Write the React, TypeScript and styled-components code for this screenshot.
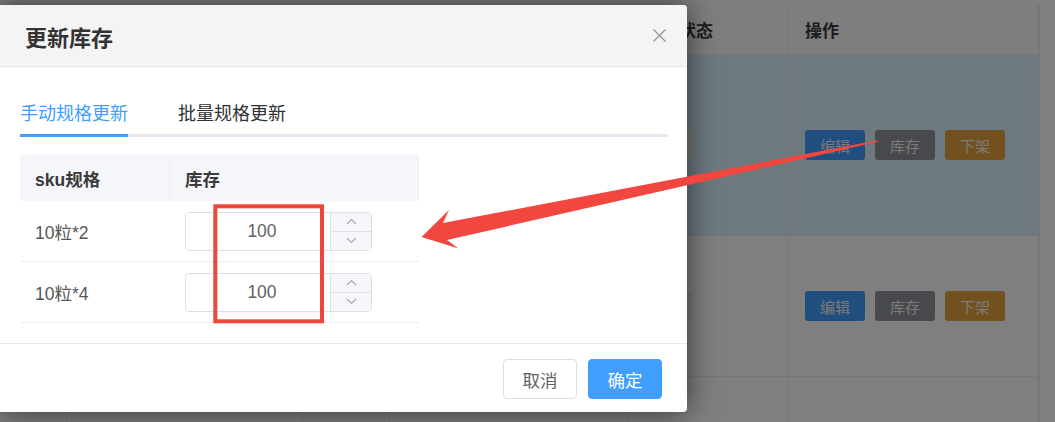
import React from "react";
import styled, { createGlobalStyle } from "styled-components";

const GlobalStyle = createGlobalStyle`
  html, body { margin: 0; padding: 0; }
  body {
    font-family: "Liberation Sans", "Noto Sans CJK SC", sans-serif;
    background: #808080;
    overflow: hidden;
  }
  * { box-sizing: border-box; }
`;

const Stage = styled.div`
  position: relative;
  width: 1055px;
  height: 422px;
  overflow: hidden;
  background: #ffffff;
`;

/* ---------- background page ---------- */

const Page = styled.div`
  padding-top: 5px;
  height: 100%;
  background: #ffffff;
`;

const BgTable = styled.div`
  display: grid;
  grid-template-columns: 67px 236px 87px 239px 160px 250px;
  grid-template-rows: 50px 181px 141px 60px;
  width: 1040px;
  border-right: 1px solid #ebeef5;
`;

const BgHead = styled.div`
  display: flex;
  align-items: center;
  padding-left: 16px;
  background: #fcfcfc;
  border-right: 1px solid #ebeef5;
  border-bottom: 1px solid #ebeef5;
  font-size: 17px;
  font-weight: 700;
  color: #3a3a3a;
  white-space: nowrap;
  overflow: hidden;
`;

const BgCell = styled.div<{ $active?: boolean }>`
  display: flex;
  align-items: center;
  gap: 10px;
  padding-left: 16px;
  background: ${(p) => (p.$active ? "#daf2ff" : "#ffffff")};
  border-right: 1px solid #ebeef5;
  border-bottom: 1px solid #ebeef5;
  font-size: 15px;
  color: #606266;
  overflow: hidden;
`;

const Tag = styled.span`
  display: inline-flex;
  align-items: center;
  justify-content: center;
  width: 47px;
  height: 28px;
  border-radius: 4px;
  background: #f0f9eb;
  border: 1px solid #e1f3d8;
  color: #67c23a;
  font-size: 15px;
`;

const toneColors: Record<string, string> = {
  primary: "#409eff",
  info: "#909399",
  warning: "#e6a23c",
};

const BgButton = styled.button<{ $tone: "primary" | "info" | "warning" }>`
  width: 60px;
  height: 30px;
  padding: 0;
  border: none;
  border-radius: 3px;
  background: ${(p) => toneColors[p.$tone]};
  color: #f4f4f4;
  font-family: "Noto Sans CJK SC", sans-serif;
  font-size: 15px;
`;

const Mask = styled.div`
  position: absolute;
  inset: 0;
  background: rgba(0, 0, 0, 0.5);
`;

/* ---------- dialog ---------- */

const Dialog = styled.div`
  position: absolute;
  left: -2px;
  top: 5px;
  width: 689px;
  background: #ffffff;
  border-radius: 4px;
  box-shadow: 0 0 30px rgba(0, 0, 0, 0.6);
  overflow: hidden;
`;

const DialogHeader = styled.div`
  display: flex;
  align-items: center;
  justify-content: space-between;
  height: 62px;
  padding: 0 21px 0 27px;
  background: #f4f4f4;
  border-bottom: 1px solid #e6e6e6;
`;

const Title = styled.span`
  font-size: 22px;
  font-weight: 700;
  color: #333333;
  font-family: "Noto Sans CJK SC", sans-serif;
`;

const CloseButton = styled.button`
  display: flex;
  padding: 0;
  border: none;
  background: transparent;
`;

const DialogBody = styled.div`
  padding: 22px 19px 0 22px;
`;

const TabBar = styled.div`
  display: flex;
  height: 48px;
  border-bottom: 3px solid #e4e7ed;
`;

const TabItem = styled.div<{ $active?: boolean }>`
  display: flex;
  align-items: center;
  height: 48px;
  margin-right: 50px;
  margin-bottom: -3px;
  border-bottom: 3px solid ${(p) => (p.$active ? "#409eff" : "transparent")};
  font-family: "Noto Sans CJK SC", sans-serif;
  font-size: 18px;
  color: ${(p) => (p.$active ? "#409eff" : "#303133")};
`;

const SkuTable = styled.div`
  display: grid;
  grid-template-columns: 150px 249px;
  margin-top: 18px;
  width: 399px;
`;

const HeadCell = styled.div`
  display: flex;
  align-items: center;
  height: 46px;
  padding-left: 15px;
  background: #f5f6fa;
  border-right: 1px solid #f0f1f5;
  font-size: 17.5px;
  font-weight: 700;
  color: #3a3a3a;
  &:last-of-type { border-right: none; }
`;

const BodyCell = styled.div`
  display: flex;
  align-items: center;
  height: 61px;
  padding-left: 15px;
  border-bottom: 1px solid #ebeef5;
  font-size: 17.5px;
  color: #555555;
`;

const InputNumber = styled.div`
  display: flex;
  width: 187px;
  height: 39px;
  border: 1px solid #dcdfe6;
  border-radius: 4px;
  overflow: hidden;
`;

const InputValue = styled.div`
  flex: 1;
  display: flex;
  align-items: center;
  justify-content: center;
  padding-left: 8px;
  font-size: 17.5px;
  color: #606266;
`;

const Steppers = styled.div`
  display: flex;
  flex-direction: column;
  width: 41px;
  border-left: 1px solid #dcdfe6;
  background: #f5f7fa;
`;

const Step = styled.div`
  flex: 1;
  display: flex;
  align-items: center;
  justify-content: center;
  & + & { border-top: 1px solid #dcdfe6; }
`;

const DialogFooter = styled.div`
  display: flex;
  justify-content: flex-end;
  gap: 11px;
  margin-top: 20px;
  padding: 15px 25px 13px;
  border-top: 1px solid #e8e8e8;
`;

const FooterButton = styled.button<{ $primary?: boolean }>`
  height: 40px;
  padding: 0 18.5px;
  border-radius: 4px;
  border: 1px solid ${(p) => (p.$primary ? "#409eff" : "#dcdfe6")};
  background: ${(p) => (p.$primary ? "#409eff" : "#ffffff")};
  color: ${(p) => (p.$primary ? "#ffffff" : "#606266")};
  font-family: "Noto Sans CJK SC", sans-serif;
  font-size: 17.5px;
`;

const Annotations = styled.svg`
  position: absolute;
  inset: 0;
  pointer-events: none;
`;

const Chevron = ({ up }: { up?: boolean }) => (
  <svg width="11" height="7" viewBox="0 0 11 7">
    <path
      d={up ? "M1 6 L5.5 1.5 L10 6" : "M1 1 L5.5 5.5 L10 1"}
      fill="none"
      stroke="#a8abb2"
      strokeWidth="1.2"
    />
  </svg>
);

const rows = [
  { sku: "10粒*2", stock: 100 },
  { sku: "10粒*4", stock: 100 },
];

/* only the last two header labels are visible beside the dialog */
const bgHeaders = ["", "", "", "", "上架状态", "操作"];

const ActionCell = ({ active }: { active?: boolean }) => (
  <BgCell $active={active}>
    <BgButton $tone="primary">编辑</BgButton>
    <BgButton $tone="info">库存</BgButton>
    <BgButton $tone="warning">下架</BgButton>
  </BgCell>
);

const DataRow = ({ active, withContent }: { active?: boolean; withContent?: boolean }) => (
  <>
    <BgCell $active={active} />
    <BgCell $active={active} />
    <BgCell $active={active} />
    <BgCell $active={active} />
    <BgCell $active={active}>{withContent && <Tag />}</BgCell>
    {withContent ? <ActionCell active={active} /> : <BgCell $active={active} />}
  </>
);

export default function App() {
  return (
    <Stage>
      <GlobalStyle />
      <Page>
        <BgTable>
          {bgHeaders.map((h, i) => (
            <BgHead key={i}>{h}</BgHead>
          ))}
          <DataRow active withContent />
          <DataRow withContent />
          <DataRow />
        </BgTable>
      </Page>
      <Mask />
      <Dialog>
        <DialogHeader>
          <Title>更新库存</Title>
          <CloseButton aria-label="关闭">
            <svg width="13" height="13" viewBox="0 0 13 13">
              <path d="M0.5 0.5 L12.5 12.5 M12.5 0.5 L0.5 12.5" stroke="#909399" strokeWidth="1.3" />
            </svg>
          </CloseButton>
        </DialogHeader>
        <DialogBody>
          <TabBar>
            <TabItem $active>手动规格更新</TabItem>
            <TabItem>批量规格更新</TabItem>
          </TabBar>
          <SkuTable>
            <HeadCell>sku规格</HeadCell>
            <HeadCell>库存</HeadCell>
            {rows.map((r) => (
              <React.Fragment key={r.sku}>
                <BodyCell>{r.sku}</BodyCell>
                <BodyCell>
                  <InputNumber>
                    <InputValue>{r.stock}</InputValue>
                    <Steppers>
                      <Step>
                        <Chevron up />
                      </Step>
                      <Step>
                        <Chevron />
                      </Step>
                    </Steppers>
                  </InputNumber>
                </BodyCell>
              </React.Fragment>
            ))}
          </SkuTable>
        </DialogBody>
        <DialogFooter>
          <FooterButton>取消</FooterButton>
          <FooterButton $primary>确定</FooterButton>
        </DialogFooter>
      </Dialog>
      <Annotations width="1055" height="422" viewBox="0 0 1055 422">
        <rect x="215.3" y="206.3" width="106.7" height="115" fill="none" stroke="#ef463c" strokeWidth="4" />
        <polygon
          points="878,140.3 443,223 449,210 421.5,237 458.5,248.5 447,240 878,141.7"
          fill="#f2473f"
        />
      </Annotations>
    </Stage>
  );
}
